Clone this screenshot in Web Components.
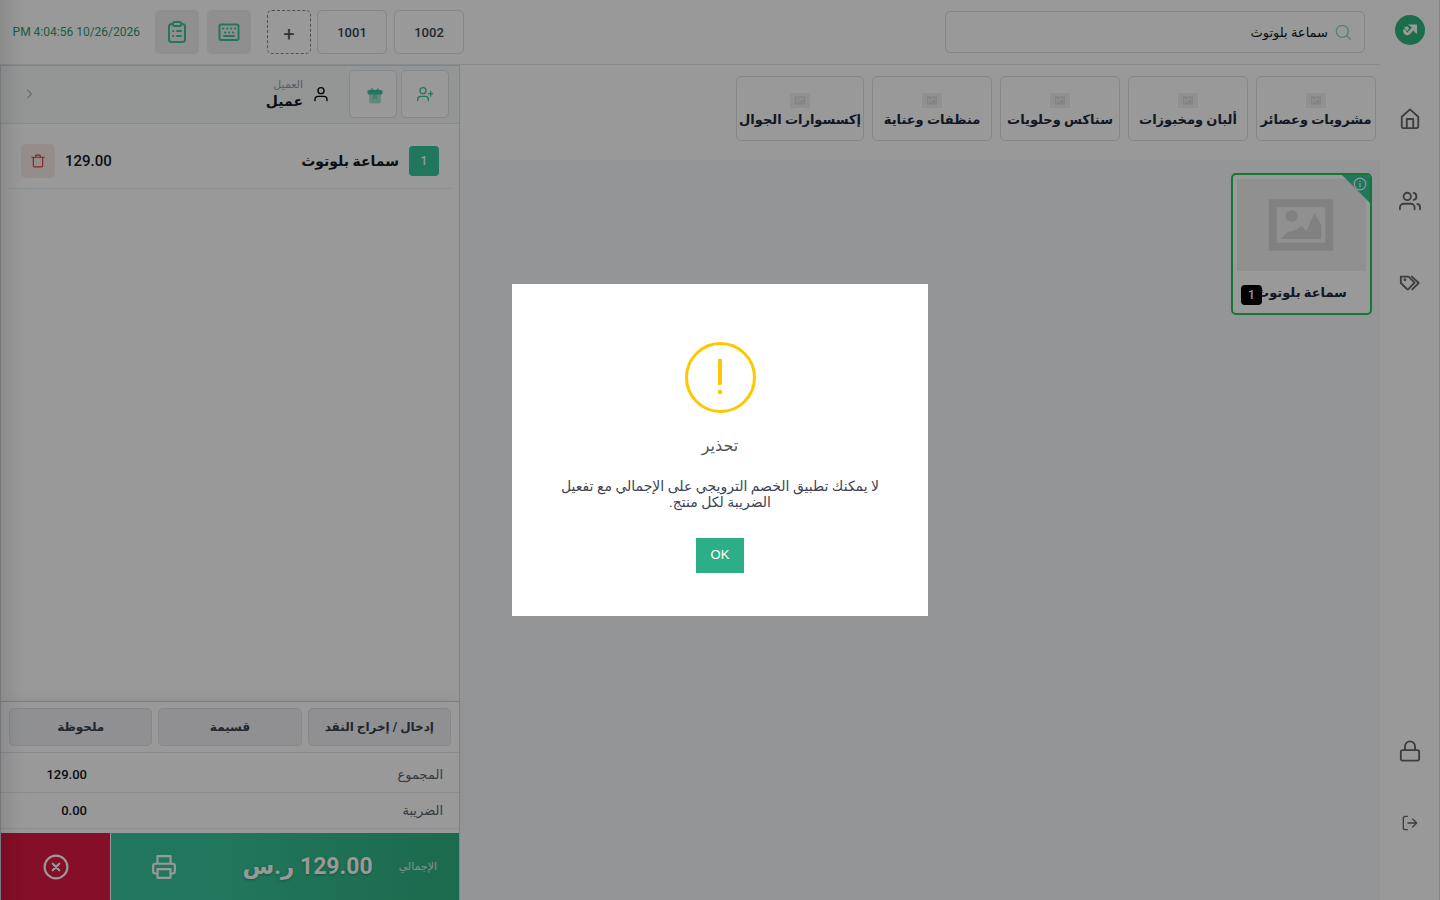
<!DOCTYPE html>
<html lang="ar" dir="rtl">
<head>
<meta charset="utf-8">
<title>نقطة البيع</title>
<style>
  :root {
    --font: Roboto, "DejaVu Sans", sans-serif;
    --primary: #38c69b;
    --primary-dark: #2fb182;
    --danger: #dc1941;
    --ink: #1e293b;
    --line: #e2e8f0;
    --page: #f5f8fb;
  }
  body {
    margin: 0;
    font-family: var(--font);
    font-size: 13px;
    color: var(--ink);
    background: var(--page);
  }
</style>
</head>
<body>

<pos-app>
  <pos-sidebar slot="sidebar"></pos-sidebar>
  <pos-topbar slot="topbar" query="سماعة بلوتوث" clock="10/26/2026 4:04:56 PM"></pos-topbar>
  <pos-categories slot="catalog">
    <pos-category>مشروبات وعصائر</pos-category>
    <pos-category>ألبان ومخبوزات</pos-category>
    <pos-category>سناكس وحلويات</pos-category>
    <pos-category>منظفات وعناية</pos-category>
    <pos-category>إكسسوارات الجوال</pos-category>
  </pos-categories>
  <pos-product slot="products" count="1">سماعة بلوتوث</pos-product>
  <pos-order slot="order">
    <pos-customer slot="customer" label="العميل" name="عميل"></pos-customer>
    <pos-line qty="1" price="129.00">سماعة بلوتوث</pos-line>
    <pos-summary slot="summary"></pos-summary>
    <pos-checkout slot="checkout" label="الإجمالي" total="129.00 ر.س"></pos-checkout>
  </pos-order>
</pos-app>

<pos-alert heading="تحذير" action="OK">لا يمكنك تطبيق الخصم الترويجي على الإجمالي مع تفعيل الضريبة لكل منتج.</pos-alert>

<script>
/* Outline icons, all on a 24x24 grid */
const ICONS = {
  home: '<path d="M3 9.500 12 1.500l9 8V20a2 2 0 0 1-2 2H5a2 2 0 0 1-2-2z"/><path d="M8.500 22V12h7v10"/>',
  users: '<circle cx="9" cy="7" r="4"/><path d="M1 21v-2a4 4 0 0 1 4-4h8a4 4 0 0 1 4 4v2M23 21v-2a4 4 0 0 0-3-3.870M16 3.130a4 4 0 0 1 0 7.750"/>',
  tags: '<path d="M2 5h8.500l6.500 6.500-7 7.500h-1L2 12z"/><path d="M14 5l7.500 7-7 7"/><circle cx="6.500" cy="8.500" r=".6"/>',
  lock: '<rect x="2" y="11" width="20" height="11.500" rx="2"/><path d="M6.500 11V7a5.500 5.500 0 0 1 11 0v4"/>',
  exit: '<path d="M8 2H5a3 3 0 0 0-3 3v14a3 3 0 0 0 3 3h3M9 12h13M16 6l6 6-6 6"/>',
  search: '<circle cx="11" cy="11" r="9"/><path d="m18 18 5 5"/>',
  clipboard: '<rect x="4" y="4" width="16" height="18" rx="2.500"/><rect x="8" y="2" width="8" height="4" rx="1.500" fill="#eee"/><path d="M8 11h.3M12 11h4M8 16h.3M12 16h4"/>',
  keyboard: '<rect x="2.500" y="4.500" width="19" height="15.500" rx="1.500"/><path d="M6 8.500h.3M10 8.500h.3M14 8.500h.3M18 8.500h.3M8 12.500h.3M12 12.500h.3M16 12.500h.3M7 16h10"/>',
  user: '<circle cx="12" cy="7" r="4.500"/><path d="M3 22v-2a4.500 4.500 0 0 1 4.500-4.500h9A4.500 4.500 0 0 1 21 20v2"/>',
  userPlus: '<circle cx="9" cy="7" r="4.500"/><path d="M1 22v-2a4.500 4.500 0 0 1 4.500-4.500h7A4.500 4.500 0 0 1 17 20v2M20.500 8v7M17 11.500h7"/>',
  chevron: '<path d="m9 4 8 8-8 8"/>',
  trash: '<path d="M1.500 5.500h21M4 6v14a2 2 0 0 0 2 2h12a2 2 0 0 0 2-2V6M8 5V3.500A1.500 1.500 0 0 1 9.500 2h5A1.500 1.500 0 0 1 16 3.500V5"/>',
  printer: '<path d="M6 9V2h12v7M6 18H4a2 2 0 0 1-2-2v-5a2 2 0 0 1 2-2h16a2 2 0 0 1 2 2v5a2 2 0 0 1-2 2h-2"/><rect x="6" y="14" width="12" height="8"/>',
  cancel: '<circle cx="12" cy="12" r="10.500"/><path d="m9 9 6 6M15 9l-6 6"/>',
  info: '<circle cx="12" cy="12" r="10"/><path d="M12 11v6M12 7v.5"/>',
  gift: '<g stroke="none" fill="currentColor"><path opacity=".45" d="M4 8h16v11a3 3 0 0 1-3 3H7a3 3 0 0 1-3-3z"/><rect x="2" y="4" width="20" height="6" rx="2"/><path opacity=".6" d="M5 4l3-3 3 3zM13 4l3-3 2 3z"/><path opacity=".4" d="M9 10h6v7l-3-2-3 2z"/></g>'
};

class PosIcon extends HTMLElement {
  constructor() {
    super();
    this.attachShadow({ mode: 'open' });
  }

  connectedCallback() {
    const size = this.getAttribute('size') || '24';
    this.shadowRoot.innerHTML = `
      <style>
        :host { display: inline-flex; flex: none; }
        svg { display: block; }
      </style>
      <svg width="${size}" height="${size}" viewBox="0 0 24 24" fill="none" stroke="currentColor"
        stroke-width="2" stroke-linecap="round" stroke-linejoin="round" aria-hidden="true">
        ${ICONS[this.getAttribute('name')]}
      </svg>
    `;
  }
}

/* Placeholder artwork for categories and products without a photo */
class PosPhoto extends HTMLElement {
  constructor() {
    super();
    this.attachShadow({ mode: 'open' });
    this.shadowRoot.innerHTML = `
      <style>
        :host { display: block; background: #f0f0f0; }
        svg { display: block; width: 100%; height: 100%; }
      </style>
      <svg viewBox="0 0 130 92" aria-hidden="true">
        <path fill="#d8d8d8" fill-rule="evenodd" d="M32 20h65v52H32zM40 28v36h49V28z"/>
        <circle cx="55" cy="37" r="6" fill="#d8d8d8"/>
        <path fill="#d8d8d8" d="M44 60l7-7 6-1 8-5 5 5 8-18 7 12v14z"/>
      </svg>
    `;
  }
}

/* Page frame: sidebar at the start, catalogue in the middle, order panel at the end */
class PosApp extends HTMLElement {
  constructor() {
    super();
    this.attachShadow({ mode: 'open' });
    this.shadowRoot.innerHTML = `
      <style>
        :host { display: flex; min-height: 100vh; }
        .main { flex: 1; min-width: 0; display: flex; flex-direction: column; }
        .work { flex: 1; display: grid; grid-template-columns: minmax(0, 1fr) 460px; }
        .catalog { min-width: 0; }
        .products { display: flex; flex-wrap: wrap; gap: 8px; padding: 13px 8px; }
      </style>
      <slot name="sidebar"></slot>
      <div class="main">
        <slot name="topbar"></slot>
        <div class="work">
          <main class="catalog">
            <slot name="catalog"></slot>
            <div class="products"><slot name="products"></slot></div>
          </main>
          <slot name="order"></slot>
        </div>
      </div>
    `;
  }
}

class PosSidebar extends HTMLElement {
  constructor() {
    super();
    this.attachShadow({ mode: 'open' });
    this.shadowRoot.innerHTML = `
      <style>
        :host {
          display: flex; flex-direction: column; justify-content: space-between;
          box-sizing: border-box; width: 60px; flex: none;
          background: #fff; border-right: 1px solid #dcdcdc; color: #666;
        }
        nav { display: flex; flex-direction: column; align-items: center; }
        .top { padding-top: 15px; }
        .bottom { padding-bottom: 69px; gap: 53px; }
        .logo { height: 30px; margin-bottom: 63px; }
        .links { display: flex; flex-direction: column; gap: 60px; }
        a { display: flex; color: inherit; }
      </style>
      <nav class="top">
        <a class="logo" href="#" aria-label="الرئيسية">
          <svg width="30" height="30" viewBox="0 0 30 30">
            <circle cx="15" cy="15" r="15" fill="#2eb87d"/>
            <path d="M13 9.500h9v9.500l-3-2.500-2-4z" fill="#fff"/>
            <path d="M19 12.500l-5 5.500q-2 2-4-.5-1-1.500 0-3" fill="none" stroke="#fff" stroke-width="3"/>
            <path d="M9 12l4-.5 1 2.500-2 2z" fill="#fff"/>
          </svg>
        </a>
        <div class="links">
          <a href="#" aria-label="المتجر"><pos-icon name="home" size="22"></pos-icon></a>
          <a href="#" aria-label="العملاء"><pos-icon name="users" size="22"></pos-icon></a>
          <a href="#" aria-label="العروض"><pos-icon name="tags" size="22"></pos-icon></a>
        </div>
      </nav>
      <nav class="bottom">
        <a href="#" aria-label="قفل"><pos-icon name="lock" size="22"></pos-icon></a>
        <a href="#" aria-label="خروج"><pos-icon name="exit" size="16"></pos-icon></a>
      </nav>
    `;
  }
}

class PosTopbar extends HTMLElement {
  constructor() {
    super();
    this.attachShadow({ mode: 'open' });
  }

  connectedCallback() {
    this.shadowRoot.innerHTML = `
      <style>
        :host {
          display: flex; align-items: center; justify-content: space-between;
          box-sizing: border-box; height: 65px; padding: 0 15px 0 12px;
          background: #fff; border-bottom: 1px solid var(--line);
        }
        .search {
          display: flex; align-items: center; gap: 7px; box-sizing: border-box;
          width: 420px; height: 42px; padding: 0 13px;
          border: 1px solid #d9dee7; border-radius: 5px; color: #8fd9bd;
        }
        input {
          flex: 1; min-width: 0; border: 0; outline: 0; padding: 0; background: none;
          font: 13px var(--font); color: #111827;
        }
        .tools { display: flex; align-items: center; direction: ltr; }
        time { width: 128px; margin-right: 15px; font-size: 12px; color: #2c9c6c; white-space: nowrap; }
        button {
          display: flex; align-items: center; justify-content: center; box-sizing: border-box;
          height: 44px; padding: 0; border-radius: 5px; font: 500 13px var(--font); color: #374151;
        }
        .tool { width: 44px; margin-right: 8px; border: 0; background: #eee; color: var(--primary); }
        .add {
          width: 44px; margin: 0 6px 0 8px; padding-top: 4px; border: 1px dashed #888;
          background: none; font-size: 20px; font-weight: normal; color: #555;
        }
        .tab { width: 70px; border: 1px solid #dcdfe6; background: none; }
        .tab + .tab { margin-left: 7px; }
      </style>
      <label class="search">
        <pos-icon name="search" size="16"></pos-icon>
        <input type="text" aria-label="بحث" value="${this.getAttribute('query')}">
      </label>
      <div class="tools">
        <time dir="rtl">${this.getAttribute('clock')}</time>
        <button class="tool" aria-label="الطلبات"><pos-icon name="clipboard"></pos-icon></button>
        <button class="tool" aria-label="لوحة المفاتيح"><pos-icon name="keyboard"></pos-icon></button>
        <button class="add">+</button>
        <button class="tab">1001</button>
        <button class="tab">1002</button>
      </div>
    `;
  }
}

class PosCategories extends HTMLElement {
  constructor() {
    super();
    this.attachShadow({ mode: 'open' });
    this.shadowRoot.innerHTML = `
      <style>
        :host {
          display: flex; gap: 8px; box-sizing: border-box; height: 95px;
          padding: 11px 4px 19px; background: #fff; overflow: hidden;
        }
      </style>
      <slot></slot>
    `;
  }
}

class PosCategory extends HTMLElement {
  constructor() {
    super();
    this.attachShadow({ mode: 'open' });
    this.shadowRoot.innerHTML = `
      <style>
        :host { display: flex; flex: none; min-width: 120px; }
        button {
          flex: 1; display: flex; flex-direction: column; align-items: center; justify-content: center;
          box-sizing: border-box; padding: 4px 2px 0; background: none;
          border: 1px solid #e2e2e2; border-radius: 5px;
          font: bold 13px/17px var(--font); color: var(--ink); white-space: nowrap;
        }
        pos-photo { width: 20px; height: 15px; margin-bottom: 3px; }
      </style>
      <button><pos-photo></pos-photo><span><slot></slot></span></button>
    `;
  }
}

class PosProduct extends HTMLElement {
  constructor() {
    super();
    this.attachShadow({ mode: 'open' });
  }

  connectedCallback() {
    this.shadowRoot.innerHTML = `
      <style>
        :host {
          display: block; position: relative; box-sizing: border-box; width: 141px; height: 142px;
          border: 2px solid #22c55e; border-radius: 5px; background: #fff; overflow: hidden;
        }
        pos-photo { height: 92px; margin: 4px; }
        .name {
          padding: 0 4px; text-align: center;
          font-size: 13px; line-height: 36px; font-weight: bold;
        }
        .corner {
          position: absolute; top: 0; right: 0; width: 28px; height: 28px; padding: 0;
          border: 0; background: var(--primary); color: #fff;
          clip-path: polygon(0 0, 100% 0, 100% 100%);
        }
        .corner pos-icon { position: absolute; top: 2px; right: 3px; }
        .count {
          position: absolute; left: 8px; bottom: 8px; width: 21px; height: 20px;
          border-radius: 4px; background: #000; color: #fff;
          font-size: 12px; line-height: 20px; font-weight: 500; text-align: center;
        }
      </style>
      <pos-photo></pos-photo>
      <div class="name"><slot></slot></div>
      <button class="corner" aria-label="تفاصيل"><pos-icon name="info" size="14"></pos-icon></button>
      <span class="count">${this.getAttribute('count')}</span>
    `;
  }
}

class PosOrder extends HTMLElement {
  constructor() {
    super();
    this.attachShadow({ mode: 'open' });
    this.shadowRoot.innerHTML = `
      <style>
        :host {
          display: flex; flex-direction: column; box-sizing: border-box;
          background: #fff; border: 1px solid #d5dbe3; border-bottom: 0;
        }
        .lines { flex: 1; padding: 9px 8px; }
      </style>
      <slot name="customer"></slot>
      <div class="lines"><slot></slot></div>
      <slot name="summary"></slot>
      <slot name="checkout"></slot>
    `;
  }
}

class PosCustomer extends HTMLElement {
  constructor() {
    super();
    this.attachShadow({ mode: 'open' });
  }

  connectedCallback() {
    this.shadowRoot.innerHTML = `
      <style>
        :host {
          display: flex; align-items: center; gap: 4px; box-sizing: border-box; height: 58px;
          padding: 0 10px 2px 20px; background: #f7faf9; border-bottom: 1px solid var(--line);
        }
        button {
          display: flex; align-items: center; justify-content: center; box-sizing: border-box;
          width: 48px; height: 48px; padding: 0; background: #fff; color: var(--primary);
          border: 1px solid #dde1e8; border-radius: 5px;
        }
        .gift { padding: 4px 0 0 3px; }
        .who { display: flex; align-items: center; gap: 10px; margin-right: 16px; color: #000; }
        .text { display: flex; flex-direction: column; }
        .label { font-size: 11px; line-height: 14px; color: #9a9aa8; }
        .name { font-size: 14px; line-height: 18px; font-weight: bold; color: #111827; }
        .more { margin-right: auto; width: 16px; height: 16px; border: 0; background: none; color: #7d8494; }
      </style>
      <button aria-label="إضافة عميل"><pos-icon name="userPlus" size="16"></pos-icon></button>
      <button class="gift" aria-label="هدية"><pos-icon name="gift" size="18"></pos-icon></button>
      <div class="who">
        <pos-icon name="user" size="16"></pos-icon>
        <div class="text">
          <span class="label">${this.getAttribute('label')}</span>
          <span class="name">${this.getAttribute('name')}</span>
        </div>
      </div>
      <button class="more" aria-label="المزيد"><pos-icon name="chevron" size="12"></pos-icon></button>
    `;
  }
}

class PosLine extends HTMLElement {
  constructor() {
    super();
    this.attachShadow({ mode: 'open' });
  }

  connectedCallback() {
    this.shadowRoot.innerHTML = `
      <style>
        :host {
          display: flex; align-items: center; gap: 10px; box-sizing: border-box; height: 56px;
          padding: 0 12px; border-bottom: 1px solid #e8ecf0; color: #111827;
        }
        .qty {
          width: 30px; height: 30px; border-radius: 4px; background: var(--primary);
          color: #fff; font-size: 12px; line-height: 30px; font-weight: 500; text-align: center;
        }
        .name { flex: 1; font-size: 14px; font-weight: bold; }
        .price { font-size: 15px; font-weight: 500; }
        button {
          display: flex; align-items: center; justify-content: center;
          width: 34px; height: 34px; padding: 0; border: 0; border-radius: 5px;
          background: #f9eaea; color: #e03b3b;
        }
      </style>
      <span class="qty">${this.getAttribute('qty')}</span>
      <span class="name"><slot></slot></span>
      <span class="price">${this.getAttribute('price')}</span>
      <button aria-label="حذف"><pos-icon name="trash" size="14"></pos-icon></button>
    `;
  }
}

class PosSummary extends HTMLElement {
  constructor() {
    super();
    this.attachShadow({ mode: 'open' });
    this.shadowRoot.innerHTML = `
      <style>
        :host { display: block; border-top: 1px solid #ccd1d9; box-shadow: 0 -4px 12px -4px rgba(0, 0, 0, .08); }
        .actions {
          display: grid; grid-template-columns: repeat(3, 1fr); gap: 6px;
          padding: 6px 8px; border-bottom: 1px solid var(--line);
        }
        button {
          height: 38px; padding: 0; border: 1px solid #dfe2e8; border-radius: 5px;
          background: #f0f1f5; font: bold 12px var(--font); color: #374151;
        }
        dl { margin: 0 0 4px; }
        .row {
          display: flex; align-items: center; justify-content: space-between;
          box-sizing: border-box; height: 36px; padding: 0 16px; border-bottom: 1px solid #e8ecf0;
        }
        .first { height: 40px; padding-top: 4px; }
        dt { font-size: 13px; color: #5b6472; }
        dd { margin: 0; width: 70px; font-size: 13px; font-weight: 500; color: #111827; }
      </style>
      <div class="actions">
        <button>إدخال / إخراج النقد</button>
        <button>قسيمة</button>
        <button>ملحوظة</button>
      </div>
      <dl>
        <div class="row first"><dt>المجموع</dt><dd>129.00</dd></div>
        <div class="row"><dt>الضريبة</dt><dd>0.00</dd></div>
      </dl>
    `;
  }
}

class PosCheckout extends HTMLElement {
  constructor() {
    super();
    this.attachShadow({ mode: 'open' });
  }

  connectedCallback() {
    this.shadowRoot.innerHTML = `
      <style>
        :host { display: flex; gap: 1px; height: 67px; }
        button { display: flex; align-items: center; border: 0; color: #fff; font-family: var(--font); }
        .pay {
          flex: 1; padding: 0 22px 0 40px;
          background: linear-gradient(to left, var(--primary-dark), var(--primary) 70%);
        }
        .label { font-size: 11px; margin-left: 26px; opacity: .8; }
        .total { font-size: 23px; font-weight: bold; text-shadow: 0 1px 3px rgba(0, 0, 0, .3); }
        .pay pos-icon { margin-right: auto; }
        .cancel { justify-content: center; width: 109px; padding: 0; background: var(--danger); }
      </style>
      <button class="pay">
        <span class="label">${this.getAttribute('label')}</span>
        <span class="total">${this.getAttribute('total')}</span>
        <pos-icon name="printer" size="26"></pos-icon>
      </button>
      <button class="cancel" aria-label="إلغاء"><pos-icon name="cancel" size="26"></pos-icon></button>
    `;
  }
}

/* Modal warning on a dimmed backdrop */
class PosAlert extends HTMLElement {
  constructor() {
    super();
    this.attachShadow({ mode: 'open' });
  }

  connectedCallback() {
    this.shadowRoot.innerHTML = `
      <style>
        :host {
          position: fixed; inset: 0; z-index: 10; display: grid; place-items: center;
          background: rgba(0, 0, 0, .4); box-shadow: inset 40px 0 30px -40px rgba(0, 0, 0, .2);
        }
        .box {
          display: flex; flex-direction: column; align-items: center; box-sizing: border-box;
          width: 416px; max-width: 100%; padding: 58px 44px 43px; background: #fff;
        }
        svg { display: block; }
        h2 { margin: 20px 0 0; font-size: 16px; line-height: 26px; font-weight: normal; color: #545454; }
        p { margin: 19px 0 28px; font-size: 14px; line-height: 16px; text-align: center; color: #3f4254; }
        button {
          width: 48px; height: 35px; padding: 0 0 2px; border: 0; background: #2caf86;
          font: 13px "Liberation Sans", sans-serif; color: #fff;
        }
      </style>
      <div class="box" role="alertdialog" aria-labelledby="heading" aria-describedby="message">
        <svg width="71" height="71" viewBox="0 0 71 71" aria-hidden="true">
          <circle cx="35.500" cy="35.500" r="34" fill="none" stroke="#ffc700" stroke-width="3"/>
          <path d="M33 17h4v24q0 2-2 2h-2z" fill="#ffc700"/>
          <circle cx="35" cy="50" r="2.300" fill="#ffc700"/>
        </svg>
        <h2 id="heading">${this.getAttribute('heading')}</h2>
        <p id="message"><slot></slot></p>
        <button>${this.getAttribute('action')}</button>
      </div>
    `;
  }
}

customElements.define('pos-icon', PosIcon);
customElements.define('pos-photo', PosPhoto);
customElements.define('pos-app', PosApp);
customElements.define('pos-sidebar', PosSidebar);
customElements.define('pos-topbar', PosTopbar);
customElements.define('pos-categories', PosCategories);
customElements.define('pos-category', PosCategory);
customElements.define('pos-product', PosProduct);
customElements.define('pos-order', PosOrder);
customElements.define('pos-customer', PosCustomer);
customElements.define('pos-line', PosLine);
customElements.define('pos-summary', PosSummary);
customElements.define('pos-checkout', PosCheckout);
customElements.define('pos-alert', PosAlert);
</script>
</body>
</html>
